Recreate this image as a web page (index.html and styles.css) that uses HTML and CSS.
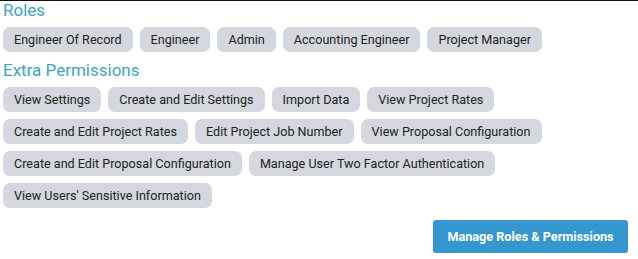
FILE: index.html
```html
<!DOCTYPE html>
<html lang="en-US">
<head>
    <meta charset="utf-8"/>
    <meta name="viewport" content="width=device-width, initial-scale=1"/>
    <title>User Roles</title>
    <link rel="stylesheet" href="styles.css">
</head>
<body>
    <div class="panel">
        <div class="section-title">Roles</div>
        <div class="chips">
            <span class="chip">Engineer Of Record</span>
            <span class="chip">Engineer</span>
            <span class="chip">Admin</span>
            <span class="chip">Accounting Engineer</span>
            <span class="chip">Project Manager</span>
        </div>

        <div class="section-title extra">Extra Permissions</div>
        <div class="chips">
            <span class="chip">View Settings</span>
            <span class="chip">Create and Edit Settings</span>
            <span class="chip">Import Data</span>
            <span class="chip">View Project Rates</span>
            <span class="chip">Create and Edit Project Rates</span>
            <span class="chip">Edit Project Job Number</span>
            <span class="chip">View Proposal Configuration</span>
            <span class="chip">Create and Edit Proposal Configuration</span>
            <span class="chip">Manage User Two Factor Authentication</span>
            <span class="chip">View Users' Sensitive Information</span>
        </div>

        <div class="actions">
            <button class="button manage">Manage Roles &amp; Permissions</button>
        </div>
    </div>
</body>
</html>
```

FILE: styles.css
```css
body {
    font-family: 'Roboto', sans-serif;
    margin: 0;
    background-color: white;
}

.panel {
    border-top: 1px solid #111;
    padding: 0 10px 0 3px;
}

.section-title {
    font-size: 17px;
    line-height: 19px;
    color: #3fa3c3;
}

.section-title.extra {
    margin-top: 9px;
}

.chips {
    display: flex;
    flex-wrap: wrap;
    gap: 7px;
    margin-top: 7px;
}

.chip {
    font-size: 12.6px;
    line-height: 25px;
    height: 25px;
    padding: 0 11px;
    border-radius: 7px;
    background-color: #d4d8de;
    color: #222;
    white-space: nowrap;
}

.actions {
    display: flex;
    justify-content: flex-end;
    margin-top: 12px;
}

.button {
    font-family: 'Roboto', sans-serif;
    font-size: 12.65px;
    font-weight: bold;
    width: 195px;
    height: 33px;
    border: none;
    border-radius: 3px;
    color: white;
    cursor: pointer;
}

.manage {
    background-color: #3597cf;
}
```
